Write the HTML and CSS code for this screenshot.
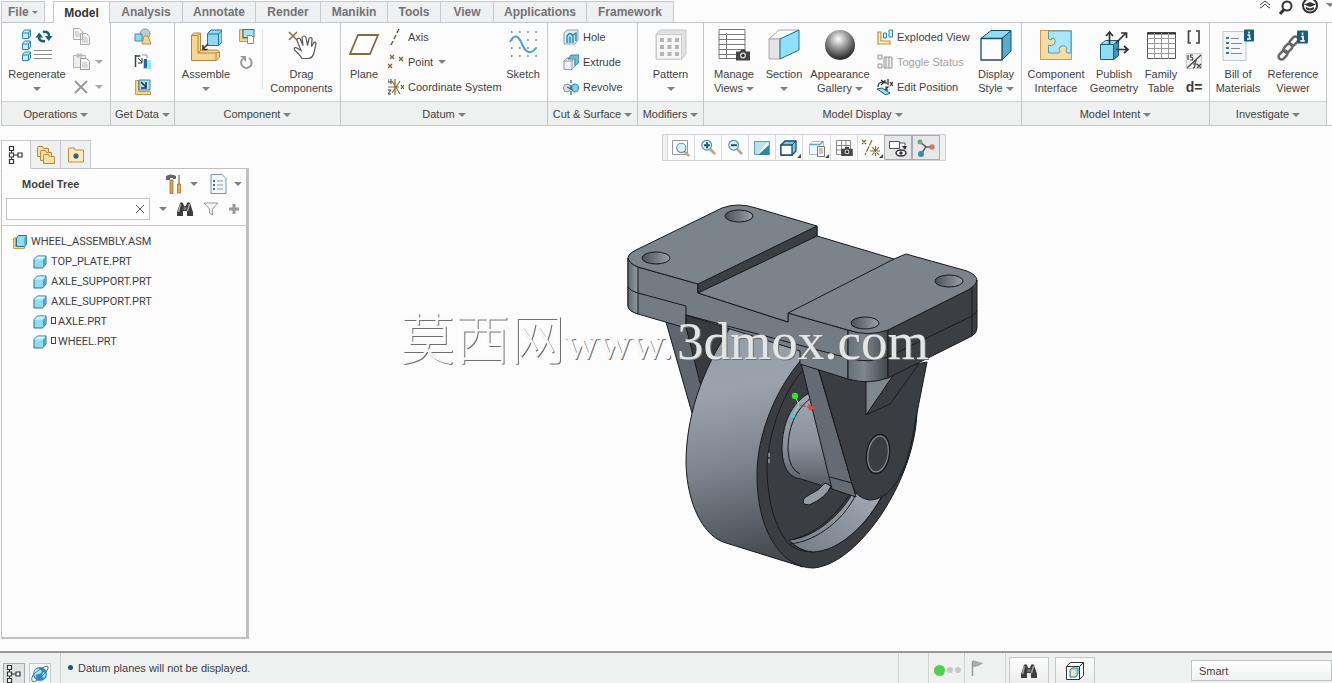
FILE: index.html
```html
<!DOCTYPE html>
<html lang="en">
<head>
<meta charset="utf-8">
<title>WHEEL_ASSEMBLY</title>
<link rel="stylesheet" href="styles.css">
</head>
<body>
<svg class="sprite" aria-hidden="true">
  <symbol id="cube" viewBox="0 0 14 14"><path d="M1 4.500L4.500 1H13v8L9.500 13H1z" fill="#8fdcf5" stroke="#2b6f8f"/><path d="M1.500 4.500L4.700 1.500H12.500L9.500 4.500z" fill="#cdf3ff"/><path d="M10 5l2.500-3v7L10 12z" fill="#4aa5c9"/></symbol>
  <symbol id="binoc" viewBox="0 0 18 16"><path d="M4 2q1.500-1.500 3 0l1 3h2l1-3q1.500-1.500 3 0l3 9v4h-6v-5H7v5H1v-4z" fill="#3d3d3d"/><path d="M4.500 3L2.500 11M13.500 3l-2 7" stroke="#a5a5a5" stroke-width="1.500"/><path d="M7.500 6h3v3h-3z" fill="#777"/></symbol>
  <symbol id="tree" viewBox="0 0 16 20"><path d="M3.500 6v2M3.500 12v3M6 10h4" stroke="#333" fill="none"/><path d="M1.500 1.500h4v4h-4zM1.500 8h4v4h-4zM1.500 14.500h4v4h-4zM10 8h4v4h-4z" fill="#fff" stroke="#333" stroke-width="1.200"/></symbol>
  <symbol id="info" viewBox="0 0 10 12"><rect width="10" height="12" rx="1" fill="#17607d"/><path d="M5 2v2M3.500 5.500H5.500V9M3 9.500h4" stroke="#fff" stroke-width="1.500" fill="none"/></symbol>
  <symbol id="camera" viewBox="0 0 14 11"><path d="M0 2h4l1-2h4l1 2h4v9H0z" fill="#444"/><circle cx="7" cy="6" r="3" fill="#ddd"/><circle cx="7" cy="6" r="1.700" fill="#333"/></symbol>
  <symbol id="lens" viewBox="0 0 18 18"><path d="M11 11l6 6" stroke="#b9a98c" stroke-width="3"/><circle cx="7.500" cy="7" r="5.500" fill="#d9f1fa" stroke="#5d8ca3" stroke-width="1.300"/></symbol>
</svg>

<header class="topbar">
  <nav class="tabs">
    <button class="tab file">File <i class="caret"></i></button>
    <button class="tab home active">Model</button>
    <button class="tab w73">Analysis</button>
    <button class="tab w73">Annotate</button>
    <button class="tab w65">Render</button>
    <button class="tab w67">Manikin</button>
    <button class="tab w53">Tools</button>
    <button class="tab w53">View</button>
    <button class="tab w93">Applications</button>
    <button class="tab w87">Framework</button>
  </nav>
  <div class="top-actions">
    <button aria-label="Minimize ribbon"><svg width="12" height="10"><path d="M1 5l5-4 5 4M1 8l2-1 3-3 3 3 2 1" fill="none" stroke="#444"/></svg></button>
    <button aria-label="Search"><svg width="16" height="16"><circle cx="9" cy="6" r="4.500" fill="none" stroke="#333" stroke-width="2"/><path d="M6 9.500L2 14" stroke="#333" stroke-width="3"/></svg></button>
    <button aria-label="Learning"><svg width="18" height="16"><circle cx="9" cy="5.500" r="7" fill="#fff" stroke="#333" stroke-width="2"/><path d="M3 4.500l6-2.500 6 2.500L9 7z" fill="#333"/><path d="M5 7v2q4 3 8 0V7L9 8.500z" fill="#333"/></svg></button>
    <i class="caret"></i>
  </div>
</header>

<section class="ribbon">
  <section class="group g-ops">
    <div class="body">
      <button class="big"><svg width="32" height="32" viewBox="0 0 32 32"><g fill="#c4effc" stroke="#3283a8"><path d="M1.500 3.500L3.500 1h6v6l-2 2.500h-6z"/><path d="M1.500 14.500L3.500 12h6v6l-2 2.500h-6z"/><path d="M1.500 25.500L3.500 23h6v6l-2 2.500h-6z"/></g><g fill="none" stroke="#3283a8"><path d="M2 4h5.500v5M7.500 4l2-2.500M2 15h5.500v5M7.500 15l2-2.500M2 26h5.500v5M7.500 26l2-2.500"/></g><path d="M13 21.500h18M13 25.500h18M13 29.500h18" stroke="#8c8c8c"/><path d="M22 3q6-1 6 4M24 12q-6 1-6-4" stroke="#17607d" stroke-width="2.500" fill="none"/><path d="M24 7h7.500L27.700 12zM14.500 8.500H22L18.200 3.500z" fill="#17607d"/></svg><span>Regenerate</span><span><i class="caret"></i></span></button>
      <div class="stack">
        <button aria-label="Copy"><svg width="17" height="17"><path d="M.5.500h6l3 3v8h-9zM7.500 5.500h6l3 3v8h-9z" fill="#f7f7f7" stroke="#aaa"/><path d="M2 4h4M2 6h5M2 8h5M9 10h5M9 12h6M9 14h6" stroke="#bbb"/></svg></button>
        <button aria-label="Paste"><svg width="17" height="17"><path d="M.5 2.500h12v12H.5zM4 1h5v3H4z" fill="#eee" stroke="#b5b5b5"/><path d="M7.500 5.500h6l3 3v8h-9z" fill="#fafafa" stroke="#999"/><path d="M9 10h5M9 12h6M9 14h6" stroke="#bbb"/></svg><i class="caret dim"></i></button>
        <button aria-label="Delete"><svg width="17" height="17"><path d="M2 3l12 12M14 3L2 15" stroke="#999" stroke-width="2"/></svg><i class="caret dim"></i></button>
      </div>
    </div>
    <button class="foot">Operations <i class="caret"></i></button>
  </section>

  <section class="group g-get">
    <div class="body">
      <div class="stack center">
        <button aria-label="User-defined feature"><svg width="18" height="18"><circle cx="11" cy="6" r="5" fill="#c3ccd4" stroke="#8195a5"/><path d="M1 6h7v7H1z" fill="#8fd8f3" stroke="#3b8bb0"/><path d="M8 16l2-8h4l3 8z" fill="#f4d592" stroke="#b68e4c"/></svg></button>
        <button aria-label="Copy geometry"><svg width="18" height="18"><path d="M1.500 2v12M1.500 3h5" stroke="#345" stroke-width="1.500" fill="none"/><path d="M9 7h8v9H9z" fill="#9be2fa"/><path d="M10 6h3v9h-3z" fill="#246a94"/><path d="M4 5l4 4M8 5v5H4" stroke="#333" fill="none"/><path d="M8 2h5v3" fill="none" stroke="#89a"/></svg></button>
        <button aria-label="Shrinkwrap"><svg width="18" height="18"><path d="M1.500 2.500h3v11h12v3h-15z" fill="#f4d592" stroke="#c79b52"/><path d="M5 2h11v10H5z" fill="#a5e3fa" stroke="#3283a8"/><path d="M7 4l5 5M12 4v6H7" stroke="#234" stroke-width="1.500" fill="none"/></svg></button>
      </div>
    </div>
    <button class="foot">Get Data <i class="caret"></i></button>
  </section>

  <section class="group g-comp">
    <div class="body">
      <button class="big"><svg width="32" height="32" viewBox="0 0 32 32"><path d="M1.500 6l3-2h6v17l4 0h13l2 2v5l-3 3.500h-25z" fill="#f5d78f" stroke="#b08443"/><path d="M2 6.500h6V24h18v7M8 6.500l2-2M8 24l3-3M26 24l3-1" stroke="#b08443" fill="none"/><path d="M17.500 4.500L21 1h11v12l-3.500 3.500h-11z" fill="#8fd8f3" stroke="#2b7296"/><path d="M18 5h10.500v11M28.500 5L32 1.500" stroke="#2b7296" fill="none"/><path d="M18 15l-5 5m0-4v4.500h4.500" stroke="#333" stroke-width="1.500" fill="none"/></svg><span>Assemble</span><span><i class="caret"></i></span></button>
      <div class="stack center">
        <button aria-label="Create"><svg width="17" height="17"><path d="M1.500 1.500h3v9h10v3h-13z" fill="#f4d592" stroke="#c79b52"/><path d="M5 1.500h11v8H5z" fill="#a5e3fa" stroke="#2b7296"/><path d="M9.500 7.500h4l2 2v6h-6z" fill="#fff" stroke="#b08443"/></svg></button>
        <button aria-label="Repeat"><svg width="16" height="16"><path d="M11 4a5.300 5.300 0 1 1-6.500 1" fill="none" stroke="#999" stroke-width="2"/><path d="M2 2h6v6z" fill="#999"/></svg></button>
      </div>
      <hr class="sep">
      <button class="big"><svg width="32" height="32" viewBox="0 0 32 32"><path d="M3 3l8 8M11 3l-8 8" stroke="#93692f" stroke-width="1.500"/><path d="M16 29.500q-2-4-7-8-2-3 1-3l5 3-4-10q0-3 3-2l3 7-1-8q2-3 4 0l1.500 8 1.500-7q2-2 3 0l-.5 8 2.500-4q2-1 2 1l-2 9q-1 5-5 6z" fill="#fff" stroke="#555" stroke-width="1.200"/></svg><span>Drag</span><span>Components</span></button>
    </div>
    <button class="foot">Component <i class="caret"></i></button>
  </section>

  <section class="group g-datum">
    <div class="body">
      <button class="big"><svg width="32" height="32" viewBox="0 0 32 32"><path d="M10 6h20l-8 19H2z" fill="#fff" stroke="#8a6a36" stroke-width="1.800"/></svg><span>Plane</span></button>
      <div class="stack">
        <button><svg width="16" height="16"><path d="M11 0L9 4M8 6L6 10M5 12l-2 4" stroke="#6d5a38" stroke-width="1.500"/></svg>Axis</button>
        <button><svg width="16" height="16"><path d="M2 1l4 4M6 1L2 5M11 3l4 4M15 3l-4 4M0 10l4 4M4 10l-4 4" stroke="#7d6a35" stroke-width="1.300"/></svg>Point <i class="caret"></i></button>
        <button><svg width="16" height="18"><path d="M4 15L12 3M4 3l8 13M7 1v16M0 9h11" stroke="#8a6a36" stroke-width="1.200"/><path d="M0 1v3h3M3 1v5M0 12h3l-3 4h3M13 7l3 4M16 7l-3 4" stroke="#333" fill="none"/></svg>Coordinate System</button>
      </div>
      <button class="big"><svg width="32" height="32" viewBox="0 0 32 32"><path d="M4 3h26M4 11h26M4 19h26M4 27h26" stroke="#666" stroke-width="1.500" stroke-dasharray="1.500 6.600"/><path d="M3 13q6-12 12 2t14 4" fill="none" stroke="#46a5cf" stroke-width="2"/></svg><span>Sketch</span></button>
    </div>
    <button class="foot">Datum <i class="caret"></i></button>
  </section>

  <section class="group g-cut">
    <div class="body">
      <div class="stack">
        <button><svg width="16" height="16"><path d="M1 4l3-3h11v10l-3 4H1z" fill="#e2ebef" stroke="#8ba4b0"/><path d="M4 14V7q3-5 6 0v7M7 14V8M10 6l3-2v8" fill="#9be2fa" stroke="#2583b0" stroke-width="1.300"/></svg>Hole</button>
        <button><svg width="16" height="16"><path d="M1 7l3-3h8v8l-3 3.500H1z" fill="#f1f1f1" stroke="#8b9ba4"/><path d="M5 5l3-4h8v7l-4 4V5z" fill="#6dbad8" stroke="#3d8aa9"/><path d="M1 7h8v8M9 7l3-3" fill="none" stroke="#8b9ba4"/></svg>Extrude</button>
        <button><svg width="16" height="16"><ellipse cx="4" cy="9" rx="3.500" ry="4" fill="#d9e3e8" stroke="#6f93a5"/><ellipse cx="12" cy="9" rx="3.500" ry="4" fill="#7fd3f2" stroke="#2d86ad"/><path d="M8 1v3M8 6v4M8 12v4M4 8l6 3" stroke="#2d6c8d" stroke-width="1.300"/></svg>Revolve</button>
      </div>
    </div>
    <button class="foot">Cut &amp; Surface <i class="caret"></i></button>
  </section>

  <section class="group g-mod">
    <div class="body">
      <button class="big"><svg width="32" height="32" viewBox="0 0 32 32"><path d="M1 5l4-4h26v24l-4 5H1z" fill="#e2e2e2" stroke="#c5c5c5"/><path d="M1.500 5.500h25V30h-25z" fill="#f7f7f7" stroke="#ccc"/><path d="M5 11h20M5 18h20M5 25h20" stroke="#b5b5b5" stroke-width="4" stroke-dasharray="4 3.500"/></svg><span>Pattern</span><span><i class="caret"></i></span></button>
    </div>
    <button class="foot">Modifiers <i class="caret"></i></button>
  </section>

  <section class="group g-disp">
    <div class="body">
      <button class="big"><svg width="32" height="32" viewBox="0 0 32 32"><path d="M1 .5h26v29H1zM1 5.500h26M1 10.500h26M1 15.500h26M1 20.500h26M1 25.500h26M8.500 4v26" fill="#fff" stroke="#777"/><use href="#camera" x="18" y="20" width="14" height="12"/></svg><span>Manage</span><span>Views <i class="caret"></i></span></button>
      <button class="big"><svg width="32" height="32" viewBox="0 0 32 32"><path d="M1 10L11 1h20L12 10z" fill="#fff" stroke="#aaa"/><path d="M1 10h11v20H1z" fill="#e4e4e4" stroke="#aaa"/><path d="M12 10L31 1v20L12 30z" fill="#8fe0fb" stroke="#246a94"/></svg><span>Section</span><span><i class="caret"></i></span></button>
      <button class="big"><svg width="32" height="32" viewBox="0 0 32 32"><defs><radialGradient id="ball" cx=".45" cy=".3" r=".7"><stop offset="0" stop-color="#fff"/><stop offset=".3" stop-color="#b9b9b9"/><stop offset=".7" stop-color="#606060"/><stop offset="1" stop-color="#222"/></radialGradient></defs><circle cx="16" cy="16" r="15" fill="url(#ball)"/></svg><span>Appearance</span><span>Gallery <i class="caret"></i></span></button>
      <div class="stack">
        <button><svg width="16" height="16"><path d="M1 3h3v9h9v3H1z" fill="#fdf0d5" stroke="#d08a2e" stroke-width="1.200"/><path d="M6.500 4h3v5h-3zM12 1h3.500v7H12z" fill="#c9f0fd" stroke="#2d86ad"/></svg>Exploded View</button>
        <button class="off"><svg width="16" height="16"><path d="M1 1h4v4H1zM1 10h4v4H1zM7 3h8v11H7zM9 3v11M12 3v11" fill="#eee" stroke="#999"/></svg>Toggle Status</button>
        <button><svg width="16" height="16"><path d="M1 8q0-5 5-5M4 1l3 2-3 3M8 1v3h2M11 0v6M13 3l3 4M16 3l-3 4M8 8h3l-3 3h3" fill="none" stroke="#222" stroke-width="1.200"/><path d="M0 10l5-1 8 5-4 2z" fill="#8fe0fb" stroke="#17607d"/></svg>Edit Position</button>
      </div>
      <button class="big"><svg width="32" height="32" viewBox="0 0 32 32"><path d="M1 9.500L11 1.500h20L22 9.500z" fill="#8fdcf5" stroke="#174d68"/><path d="M22 9.500l9-8V22l-9 9z" fill="#55acd0" stroke="#174d68"/><path d="M1 9.500h21V31H1z" fill="#fff" stroke="#174d68" stroke-width="1.300"/></svg><span>Display</span><span>Style <i class="caret"></i></span></button>
    </div>
    <button class="foot">Model Display <i class="caret"></i></button>
  </section>

  <section class="group g-intent">
    <div class="body">
      <button class="big"><svg width="32" height="32" viewBox="0 0 32 32"><path d="M.5 1.500h31v29H.5z" fill="#fbdc9f" stroke="#c99c55"/><path d="M8.500 2h22.500v22h-4q-2-3 0-5-3-4-7-1-2 2 0 4l-1 2H8.500v-8q3 2 6-1 2-4-1-6-3 0-2 2l-3-1z" fill="#a9e7fb" stroke="#4e9dbd"/></svg><span>Component</span><span>Interface</span></button>
      <button class="big"><svg width="32" height="32" viewBox="0 0 32 32"><path d="M2.500 15.500l5-4h13v15l-5 4h-13z" fill="#8fdcf5" stroke="#17607d"/><path d="M15.500 15.500l5-4v15l-5 4z" fill="#4294ba" stroke="#17607d"/><path d="M2.500 15.500h13v15" stroke="#17607d" fill="none"/><path d="M11.500 15V3M8 7l3.500-4L15 7M18 14L28 4M23 4h5.500v5M18 20.500h12M26 17l4 3.500-4 3.500" fill="none" stroke="#333" stroke-width="1.700"/></svg><span>Publish</span><span>Geometry</span></button>
      <button class="big"><svg width="32" height="32" viewBox="0 0 32 32"><path d="M2.500 3.500h28v26h-28z" fill="#fff" stroke="#555"/><path d="M2 4.500h29" stroke="#333" stroke-width="2"/><path d="M2.500 9.500h28M2.500 14.500h28M2.500 19.500h28M2.500 24.500h28M9.500 4v26M16.500 4v26M23.500 4v26" stroke="#999"/></svg><span>Family</span><span>Table</span></button>
      <div class="stack center">
        <button aria-label="Parameters"><svg width="16" height="16"><path d="M5 2H2.500v12H5M10 2h3v12h-3" fill="none" stroke="#444" stroke-width="1.700"/></svg></button>
        <button aria-label="Switch Dimensions"><svg width="17" height="17"><path d="M.5.500h15v15H.5z" fill="#f1f1f1" stroke="#ccc"/><path d="M2 2v5M7 2H4.500v2q3 0 2 3H4M1 15L15 2M7 15q2 0 2-4t2-3M7 11h4M11 11l4 4M15 11l-4 4" stroke="#444" stroke-width="1.200" fill="none"/></svg></button>
        <button class="rel">d=</button>
      </div>
    </div>
    <button class="foot">Model Intent <i class="caret"></i></button>
  </section>

  <section class="group g-inv">
    <div class="body">
      <button class="big"><svg width="32" height="32" viewBox="0 0 32 32"><path d="M1 2.500h23v29H1z" fill="#f5f6f7" stroke="#bcc"/><path d="M4 9h3M4 14h3M4 19h3M4 24h3" stroke="#2f7a9d" stroke-width="2"/><path d="M9 9.500h8M9 14.500h11M9 19.500h9M9 24.500h11" stroke="#888"/><use href="#info" x="22" y="0" width="10" height="13"/></svg><span>Bill of</span><span>Materials</span></button>
      <button class="big"><svg width="32" height="32" viewBox="0 0 32 32"><g fill="none" stroke="#666" stroke-width="2.500"><rect x="-5" y="-3" width="10" height="6" rx="3" transform="translate(6 26)rotate(-45)"/><rect x="-5" y="-3" width="10" height="6" rx="3" transform="translate(11 19)rotate(-45)"/><rect x="-5" y="-3" width="10" height="6" rx="3" transform="translate(17 12)rotate(-45)"/></g><use href="#info" x="20" y="1" width="11" height="14"/></svg><span>Reference</span><span>Viewer</span></button>
    </div>
    <button class="foot">Investigate <i class="caret"></i></button>
  </section>
</section>

<main class="workspace">
  <aside class="side">
    <nav class="side-tabs">
      <button class="active" aria-label="Model Tree"><svg width="16" height="20"><use href="#tree"/></svg></button>
      <button aria-label="Folder Browser"><svg width="20" height="20"><g fill="#fbe0a2" stroke="#b88b45"><path d="M1.500 2.500q0-1 1-1h4l1 2h5v8h-11z"/><path d="M4.500 6.500q0-1 1-1h4l1 2h5v8h-11z"/><path d="M7.500 10.500q0-1 1-1h4l1 2h5v7h-11z"/></g></svg></button>
      <button aria-label="Favorites"><svg width="18" height="18"><path d="M1.500 3q0-1 1-1H7l1 2h8.500v12h-15z" fill="#fdeabd" stroke="#c08d45"/><path d="M9 7v6M6 10h6M7 8l4 4M11 8l-4 4" stroke="#215e85" stroke-width="1.200"/></svg></button>
    </nav>
    <section class="panel">
      <div class="panel-head">
        <h2>Model Tree</h2>
        <button aria-label="Settings"><svg width="18" height="20"><path d="M1 2q5-3 10 0v3H8V4H5v2H1z" fill="#666"/><path d="M5 6h3v13.500H5z" fill="#d9a74c" stroke="#94692b" stroke-width=".7"/><path d="M14 1v9" stroke="#888" stroke-width="1.500"/><path d="M12.500 10h3v9h-3z" fill="#e2ad4a" stroke="#94692b" stroke-width=".7"/></svg><i class="caret"></i></button>
        <button aria-label="Show"><svg width="17" height="20"><path d="M1 .5h11l4 4v15H1z" fill="#f3f8fb" stroke="#7e93a3"/><path d="M3 7h2M3 11h2M3 15h2" stroke="#2f7a9d" stroke-width="2"/><path d="M7 7h6M7 11h6M7 15h6" stroke="#999"/></svg><i class="caret"></i></button>
      </div>
      <div class="panel-search">
        <div class="field"><input type="text" aria-label="Search tree"><button aria-label="Clear"><svg width="10" height="10"><path d="M1 1l8 8M9 1L1 9" stroke="#555"/></svg></button></div>
        <i class="caret"></i>
        <button aria-label="Find"><svg width="18" height="16"><use href="#binoc"/></svg></button>
        <button aria-label="Filter"><svg width="16" height="16"><path d="M1 2h14L9.500 8v6l-3-2V8z" fill="#f4f4f4" stroke="#999"/></svg></button>
        <button aria-label="Add"><svg width="12" height="12"><path d="M6 1v10M1 6h10" stroke="#999" stroke-width="3"/></svg></button>
      </div>
      <ul class="tree">
        <li><svg width="14" height="14"><path d="M.5 3.500l2-1v9h9v2H.5z" fill="#f7d990" stroke="#c79b52"/><path d="M3.500 3L5.500.500h8v9l-2 2h-8z" fill="#8fdcf5" stroke="#2b6f8f"/><path d="M11.500 3l2-2.500v9l-2 2z" fill="#4aa5c9"/></svg>WHEEL_ASSEMBLY.ASM</li>
        <li class="child"><svg width="14" height="14"><use href="#cube"/></svg>TOP_PLATE.PRT</li>
        <li class="child"><svg width="14" height="14"><use href="#cube"/></svg>AXLE_SUPPORT.PRT</li>
        <li class="child"><svg width="14" height="14"><use href="#cube"/></svg>AXLE_SUPPORT.PRT</li>
        <li class="child"><svg width="14" height="14"><use href="#cube"/></svg><i class="flag"></i>AXLE.PRT</li>
        <li class="child"><svg width="14" height="14"><use href="#cube"/></svg><i class="flag"></i>WHEEL.PRT</li>
      </ul>
    </section>
  </aside>

  <section class="canvas">
    <div class="view-tools">
      <button aria-label="Refit"><svg width="20" height="20"><path d="M1.500 2.500h15v14h-15z" fill="none" stroke="#999"/><use href="#lens" x="4" y="4" width="15" height="15"/></svg></button>
      <button aria-label="Zoom In"><svg width="20" height="20"><use href="#lens" x="2" y="1" width="16" height="16"/><path d="M6 7.200h6M9 4.200v6" stroke="#17607d" stroke-width="2"/></svg></button>
      <button aria-label="Zoom Out"><svg width="20" height="20"><use href="#lens" x="2" y="1" width="16" height="16"/><path d="M6 7.200h6" stroke="#17607d" stroke-width="2"/></svg></button>
      <button aria-label="Repaint"><svg width="20" height="20"><path d="M2.500 3.500h15v13h-15z" fill="#e3f4fa" stroke="#6d99ab"/><path d="M3 4h14v2L5 16H3z" fill="#b7e2f1"/><path d="M6 17L17 7v10z" fill="#2b87aa"/><path d="M8 14l8-9" stroke="#fff" stroke-width="1.500"/></svg></button>
      <button aria-label="Display Style"><svg width="20" height="20"><path d="M2 7l4-4h11v10l-4 4H2z" fill="#74c8e6" stroke="#174d68" stroke-width="1.300"/><path d="M2 7h11v10H2z" fill="#fff" stroke="#174d68" stroke-width="1.300"/><path d="M13 7l4-4" stroke="#174d68"/></svg><i class="more"></i></button>
      <button aria-label="Saved Orientations"><svg width="20" height="20"><path d="M2.500 6.500l3-3h11v10l-3 3h-11z" fill="#f3f8fa" stroke="#a5bac3"/><path d="M3 6.500h10l3-3" fill="none" stroke="#5aaccc" stroke-width="1.500"/><path d="M10.500 8.500h7v10h-7z" fill="#fff" stroke="#777"/><path d="M12 11h4M12 13h4M12 15h4" stroke="#888"/></svg><i class="more"></i></button>
      <button aria-label="View Manager"><svg width="20" height="20"><path d="M2.500 2.500h14v14h-14zM3 7.500h14M3 12h14M7.500 3v14M12 3v14" fill="#fff" stroke="#888"/><use href="#camera" x="7" y="9" width="12" height="9"/></svg></button>
      <button aria-label="Datum Display"><svg width="20" height="20"><path d="M1 2l4 4M5 2L1 6M11 2L4 17M11 9l7 8M18 9l-7 8M14.500 8v10M9 13h10" stroke="#806522" stroke-width="1.100" stroke-dasharray="6 1"/></svg><i class="more"></i></button>
      <button class="on" aria-label="Annotation Display"><svg width="20" height="20"><path d="M1.500 3.500h10v7h-10zM12 5h5v5" fill="#fff" stroke="#555"/><path d="M14 8l3 4 2-4z" fill="#333"/><ellipse cx="13" cy="15" rx="5" ry="3" fill="#fff" stroke="#333" stroke-width="1.500"/><circle cx="13" cy="15" r="1.700" fill="#333"/></svg></button>
      <button class="on" aria-label="Spin Center"><svg width="20" height="20"><path d="M4 4l6 5-5 7M10 9h7" stroke="#555" fill="none" stroke-width="1.500"/><circle cx="4" cy="4" r="2.500" fill="#7aa17b"/><circle cx="5" cy="16" r="3" fill="#3f86ad"/><circle cx="16" cy="9" r="2.700" fill="#d47462"/></svg></button>
    </div>

    <svg class="assembly" viewBox="620 195 370 385" role="img" aria-label="Caster wheel assembly">
      <defs>
        <linearGradient id="tread" x1="0" y1="0" x2=".15" y2="1"><stop offset="0" stop-color="#949ca5"/><stop offset=".3" stop-color="#9aa2ab"/><stop offset=".6" stop-color="#7d858e"/><stop offset="1" stop-color="#474c52"/></linearGradient>
        <linearGradient id="corner"><stop offset="0" stop-color="#666e76"/><stop offset=".4" stop-color="#7e868e"/><stop offset="1" stop-color="#42474c"/></linearGradient>
        <linearGradient id="lcorner"><stop offset="0" stop-color="#646b72"/><stop offset=".8" stop-color="#899199"/></linearGradient>
        <linearGradient id="hub" x1="0" y1="0" x2="0" y2="1"><stop offset="0" stop-color="#a0a8b1"/><stop offset=".5" stop-color="#89919a"/><stop offset="1" stop-color="#4d5258"/></linearGradient>
        <linearGradient id="hole"><stop offset="0" stop-color="#4c5157"/><stop offset="1" stop-color="#99a1a9"/></linearGradient>
        <linearGradient id="rim" x1="0" y1="1" x2="1" y2="0"><stop offset="0" stop-color="#737b83"/><stop offset="1" stop-color="#a3abb5"/></linearGradient>
      </defs>
      <g stroke="#181a1d" stroke-width="1" stroke-linejoin="round">
        <path d="M666 322L686 326 702 383 692 413z" fill="#5f666d"/>
        <path d="M685 314L740 330 704 384 700 383 686 327z" fill="#383c41"/>
        <path d="M732 325C700 372 686 420 686 463C687 505 704 537 726 543L803 567L850 520L812 345z" fill="url(#tread)"/>
        <path d="M802 359C775 390 757 435 757 475C757 535 784 568 813 568C858 565 916 480 917 410L900 350z" fill="#3a3e43"/>
        <path d="M803 370C780 396 767 440 767 470C768 515 782 537 790 545C797 550 805 552 813 552C840 550 868 524 884 493" fill="none"/>
        <path d="M789 540C815 538 842 513 852 494L884 492C868 524 840 551 813 552Q799 551 789 540z" fill="url(#rim)"/>
        <path d="M790 544C819 541 845 517 855 496M794 539C817 533 838 513 849 495" fill="none"/>
        <path d="M809 393C786 407 782 432 782 450Q783 477 801 479L852 495 845 470z" fill="url(#hub)"/>
        <path d="M811 398C791 413 788 435 788 450Q789 469 800 474" fill="none"/>
        <path d="M804 504Q801 499 809 495Q820 490 825 483L831 486Q826 498 809 505z" fill="#949ca5"/>
        <path d="M801 363L818 368 856 497 832 489z" fill="#646b72"/>
        <path d="M830 477L852 483" fill="none"/>
        <path d="M818 367L848 376 927 362L915 423C909 465 895 500 869 500Q857 498 853 487z" fill="#3a3e43"/>
        <path d="M866 381V415L894 374z" fill="#7f878f"/>
        <path d="M866 415L890 404 918 365" fill="none"/>
        <ellipse cx="878" cy="454" rx="11.500" ry="20" transform="rotate(9 878 454)" fill="#3a3e43" stroke="#111"/>
        <ellipse cx="878" cy="454" rx="10" ry="18" transform="rotate(9 878 454)" fill="none" stroke="#8b939b"/>

        <path d="M628 258V306Q629 311 638 314L686 328V315L800 351V364L848 379V330L788 313V322L698 293V284L638 267z" fill="#737b83"/>
        <path d="M848 330Q867 336 888 330V378Q868 385 848 379z" fill="url(#corner)"/>
        <path d="M888 330L972 288Q977 285 977 280V328Q977 333 972 336L888 378z" fill="#3b3f44"/>
        <path d="M628 258Q630 264 638 267V314Q628 311 628 306z" fill="url(#lcorner)"/>
        <path d="M638 267Q628 263 628 257Q629 253 636 250L722 208Q738 202 756 208L817 226V236L894 259 906 254 967 271Q986 279 968 290L888 330Q868 337 848 330L788 313V322L698 293V284z" fill="#7b838b"/>
        <path d="M698 284L817 226V236L698 293z" fill="#3b3f44"/>
        <path d="M788 313L894 259M628 287Q630 291 638 293L686 306V327M686 315L848 358Q868 364 888 357L972 316Q977 313 977 310M972 288V336" fill="none"/>
        <g fill="url(#hole)"><ellipse cx="739" cy="216" rx="14" ry="6"/><ellipse cx="656" cy="258" rx="14" ry="6"/><ellipse cx="949" cy="281" rx="14" ry="6"/><ellipse cx="865" cy="323" rx="14" ry="6"/></g>
      </g>
      <path d="M769 463v-12" stroke="#c9cdd1" stroke-dasharray="4 2"/>
      <path d="M795 396L799 405 792 417" stroke="#7fe3df" fill="none"/><path d="M799 405l13 3" stroke="#e33" stroke-dasharray="3 1"/><path d="M808 404l8 4-7 3z" fill="#e0463d"/><circle cx="795" cy="396" r="3.200" fill="#2fe32f"/><circle cx="793" cy="416" r="2" fill="#35d6d6"/>
    </svg>
    <p class="watermark"><span class="cjk">莫西网</span><span class="www">www.</span><span class="dom">3dmox.com</span></p>
  </section>
</main>

<footer class="status">
  <div class="st-left">
    <button class="on" aria-label="Toggle tree"><svg width="16" height="20"><use href="#tree"/></svg></button>
    <button aria-label="Browser"><svg width="20" height="20"><circle cx="10" cy="10" r="7" fill="#2e8fc7"/><path d="M5 6q4-3 6 0t-3 4 0 5Q2 12 5 6zM13 8l3 2-2 4-2-2z" fill="#bfe6f5"/><path d="M2 17Q0 12 9 6T18 3Q19 6 11 13T2 17z" fill="none" stroke="#45718c"/></svg></button>
  </div>
  <p class="message"><i></i>Datum planes will not be displayed.</p>
  <div class="cell c-empty"></div>
  <div class="cell c-dots"><i class="go"></i><i></i><i></i></div>
  <div class="cell c-flag"><svg width="14" height="18"><path d="M2.500 2v15" stroke="#999" stroke-width="1.500"/><path d="M3 1q5 2 10 3-4 4-10 4z" fill="#aaa"/></svg></div>
  <div class="cell c-btns">
    <button aria-label="Find"><svg width="18" height="18"><use href="#binoc"/></svg></button>
    <button aria-label="Select geometry"><svg width="20" height="20"><path d="M1.500 5.500l4-4h13v13l-4 4h-13zM1.500 5.500h13v13M14.500 5.500l4-4" fill="#fff" stroke="#333"/><path d="M5 9l2-2h6v6l-2 3H5z" fill="#8fdcf5" stroke="#2b7fa5"/><path d="M6 9h4v6H6z" fill="#fbe7a5"/></svg></button>
  </div>
  <select aria-label="Selection filter"><option>Smart</option></select>
</footer>
</body>
</html>
```
FILE: styles.css
```css
* { box-sizing: border-box; }
body {
  margin: 0;
  height: 100vh;
  display: flex;
  flex-direction: column;
  overflow: hidden;
  background: #fcfcfd;
  color: #3f3f3f;
  font: 11px/14px "Liberation Sans", Arial, sans-serif;
}
button {
  border: 0;
  padding: 0;
  background: none;
  color: inherit;
  font: inherit;
}
svg { display: block; flex: none; }
p, h2, ul { margin: 0; padding: 0; }
.sprite { position: absolute; width: 0; height: 0; }
.caret {
  display: inline-block;
  vertical-align: middle;
  flex: none;
  border: 4px solid transparent;
  border-top-color: #808080;
  border-bottom: 0;
}
.caret.dim { border-top-color: #a8a8a8; }

/* Tabs */
.topbar {
  display: flex;
  justify-content: space-between;
  height: 22px;
  flex: none;
}
.tabs { display: flex; padding: 1px 0 0 1px; }
.tab {
  border: 1px solid #c6c9ce;
  border-left: 0;
  border-bottom: 0;
  background: #eff0f1;
  color: #737373;
  font-size: 12px;
  font-weight: bold;
}
.tab.file { width: 44px; margin-right: 8px; border-left: 1px solid #c6c9ce; }
.tab.file .caret { border-width: 3px; border-bottom: 0; }
.tab.home { width: 57px; border-left: 1px solid #c6c9ce; }
.tab.active { background: #fcfcfd; color: #333; margin-bottom: -1px; z-index: 1; }
.w53 { width: 53px; }
.w65 { width: 65px; }
.w67 { width: 67px; }
.w73 { width: 73px; }
.w87 { width: 87px; }
.w93 { width: 93px; }
.top-actions { display: flex; align-items: flex-start; gap: 7px; }
.top-actions .caret { margin: 3px -2px 0 0; }

/* Ribbon */
.ribbon {
  display: flex;
  flex: none;
  border: 1px solid #c3c6cb;
  border-right: 0;
  margin-left: 1px;
}
.group {
  display: flex;
  flex-direction: column;
  border-right: 1px solid #c3c6cb;
}
.body { display: grid; height: 78px; align-items: start; }
.foot {
  height: 24px;
  background: #eff0f0;
  border-top: 1px solid #d0d2d5;
  white-space: nowrap;
}
.g-ops { width: 109px; }
.g-ops .body { grid-template-columns: 70px 1fr; }
.g-get { width: 64px; }
.g-comp { width: 166px; }
.g-comp .body { grid-template-columns: 62px 18px 8px 1fr; }
.g-datum { width: 207px; }
.g-datum .body { grid-template-columns: 46px 112px 48px; }
.g-cut { width: 90px; }
.g-cut .stack { padding-left: 15px; }
.g-mod { width: 66px; }
.g-disp { width: 318px; }
.g-disp .body { grid-template-columns: 60px 40px 72px 95px 50px; }
.g-intent { width: 188px; }
.g-intent .body { grid-template-columns: 68px 48px 46px 20px; }
.g-inv { width: 117px; }
.g-inv .body { grid-template-columns: 56px 54px; }
.big {
  display: flex;
  flex-direction: column;
  align-items: center;
  padding-top: 6px;
  white-space: nowrap;
}
.big svg { margin-bottom: 6px; }
.stack { display: grid; grid-auto-rows: 25px; padding: 1px 0 0 1px; }
.stack button {
  display: flex;
  align-items: center;
  gap: 4px;
  white-space: nowrap;
}
.stack .caret { margin-left: 1px; }
.stack.center { padding-left: 0; }
.stack.center button { justify-content: center; }
.off { color: #a3a3a3; }
.stack .rel { font-size: 14px; font-weight: bold; }
.sep {
  width: 1px;
  height: 60px;
  margin: 6px 0 0 auto;
  border: 0;
  background: #e0e1e3;
}

/* Model tree */
.workspace { display: flex; flex: 1; min-height: 0; }
.side {
  display: flex;
  flex-direction: column;
  width: 248px;
  margin-left: 1px;
  padding: 14px 0 12px;
  flex: none;
}
.side-tabs { display: flex; height: 29px; flex: none; }
.side-tabs button {
  display: flex;
  align-items: center;
  justify-content: center;
  width: 30px;
  border: 1px solid #c6c9ce;
  border-left: 0;
  background: #eff0f1;
}
.side-tabs .active {
  position: relative;
  z-index: 1;
  background: #fcfcfd;
  border-bottom-color: #fcfcfd;
  border-left: 1px solid #c6c9ce;
}
.panel {
  flex: 1;
  margin-top: -1px;
  border: 1px solid #c0c0c3;
  border-width: 1px 3px 2px 1px;
}
.panel-head {
  display: flex;
  align-items: center;
  gap: 12px;
  height: 29px;
  padding: 0 4px 0 20px;
}
.panel-head h2 { flex: 1; font-size: 11px; line-height: 14px; }
.panel-head button { display: flex; align-items: center; gap: 7px; }
.panel-search {
  display: flex;
  align-items: center;
  gap: 9px;
  height: 28px;
  padding: 0 6px 6px 4px;
  border-bottom: 1px solid #c6c9ce;
}
.field {
  display: flex;
  align-items: center;
  flex: 1;
  min-width: 0;
  height: 22px;
  padding-right: 4px;
  background: #fff;
  border: 1px solid #c0c3c8;
}
.field input { flex: 1; min-width: 0; border: 0; outline: 0; background: none; font: inherit; }
.tree { padding-top: 6px; list-style: none; font-family: Roboto, "Liberation Sans", sans-serif; }
.tree li {
  display: flex;
  align-items: center;
  gap: 4px;
  height: 20px;
  padding-left: 11px;
}
.tree .child { padding-left: 31px; }
.flag { width: 5px; height: 7px; margin: 0 -2px 3px 0; border: 1px solid #444; }

/* Graphics area */
.canvas { position: relative; flex: 1; }
.view-tools {
  display: flex;
  width: 284px;
  height: 27px;
  margin: 8px 0 0 413px;
  padding: 0 5px 0 4px;
  border: 1px solid #cfd1d4;
  background: #f0f0f1;
}
.view-tools button {
  position: relative;
  display: flex;
  align-items: center;
  justify-content: center;
  flex: 1;
  border-left: 1px solid #d6d8da;
  background: #fcfcfd;
}
.view-tools .on { background: #e6e7e9; border: 1px solid #a9abae; }
.more {
  position: absolute;
  right: 1px;
  bottom: 2px;
  border: 2px solid #444;
  border-top-color: transparent;
  border-left-color: transparent;
}
.assembly {
  position: absolute;
  left: 371px;
  top: 69px;
  width: 370px;
  height: 385px;
}
.watermark {
  position: absolute;
  left: 151px;
  top: 177px;
  display: flex;
  align-items: baseline;
  color: #e3e6e6;
  text-shadow: 1px 1px 0 #6f6f6f;
  white-space: nowrap;
  line-height: 64px;
}
.cjk {
  color: #fafafa;
  font-family: "Noto Sans CJK SC", sans-serif;
  font-size: 55px;
  font-weight: 300;
}
.www {
  width: 112px;
  color: #fafafa;
  font-family: "Liberation Serif", serif;
  font-size: 46px;
}
.dom { font-family: "Liberation Serif", serif; font-size: 53px; }

/* Status bar */
.status {
  display: flex;
  flex: none;
  height: 32px;
  overflow: hidden;
  border-top: 2px solid #999;
  background: #eff0f0;
}
.st-left {
  display: flex;
  gap: 4px;
  width: 61px;
  padding: 10px 0 0 3px;
  border-right: 1px solid #d2d2d2;
}
.status button {
  display: flex;
  align-items: center;
  justify-content: center;
  height: 22px;
  width: 22px;
  border: 1px solid #c5c7ca;
  background: #f7f7f8;
}
.status .on { background: #e2e3e5; border-color: #a9abae; }
.message { display: flex; gap: 5px; flex: 1; padding: 8px 0 0 7px; }
.message i { width: 5px; height: 5px; margin-top: 4px; border-radius: 50%; background: #1b5578; }
.cell { border-left: 1px solid #d2d2d2; }
.c-empty { width: 30px; }
.c-dots { display: flex; align-items: center; gap: 2px; width: 36px; padding: 4px 0 0 5px; }
.c-dots i { width: 6px; height: 6px; border-radius: 50%; background: #c9c9c9; }
.c-dots .go { width: 11px; height: 11px; background: #4fce4f; }
.c-flag { width: 41px; padding: 6px 0 0 5px; }
.c-btns { display: flex; gap: 6px; width: 186px; padding: 4px 0 0 3px; }
.status .c-btns button { width: 40px; height: 28px; background: linear-gradient(#fdfdfd, #ececee); }
.status select {
  appearance: none;
  width: 141px;
  height: 21px;
  margin-top: 7px;
  padding: 0 7px;
  border: 1px solid #c0c3c8;
  border-radius: 0;
  background: linear-gradient(#fff, #f1f1f2);
  color: inherit;
  font: inherit;
}
```
